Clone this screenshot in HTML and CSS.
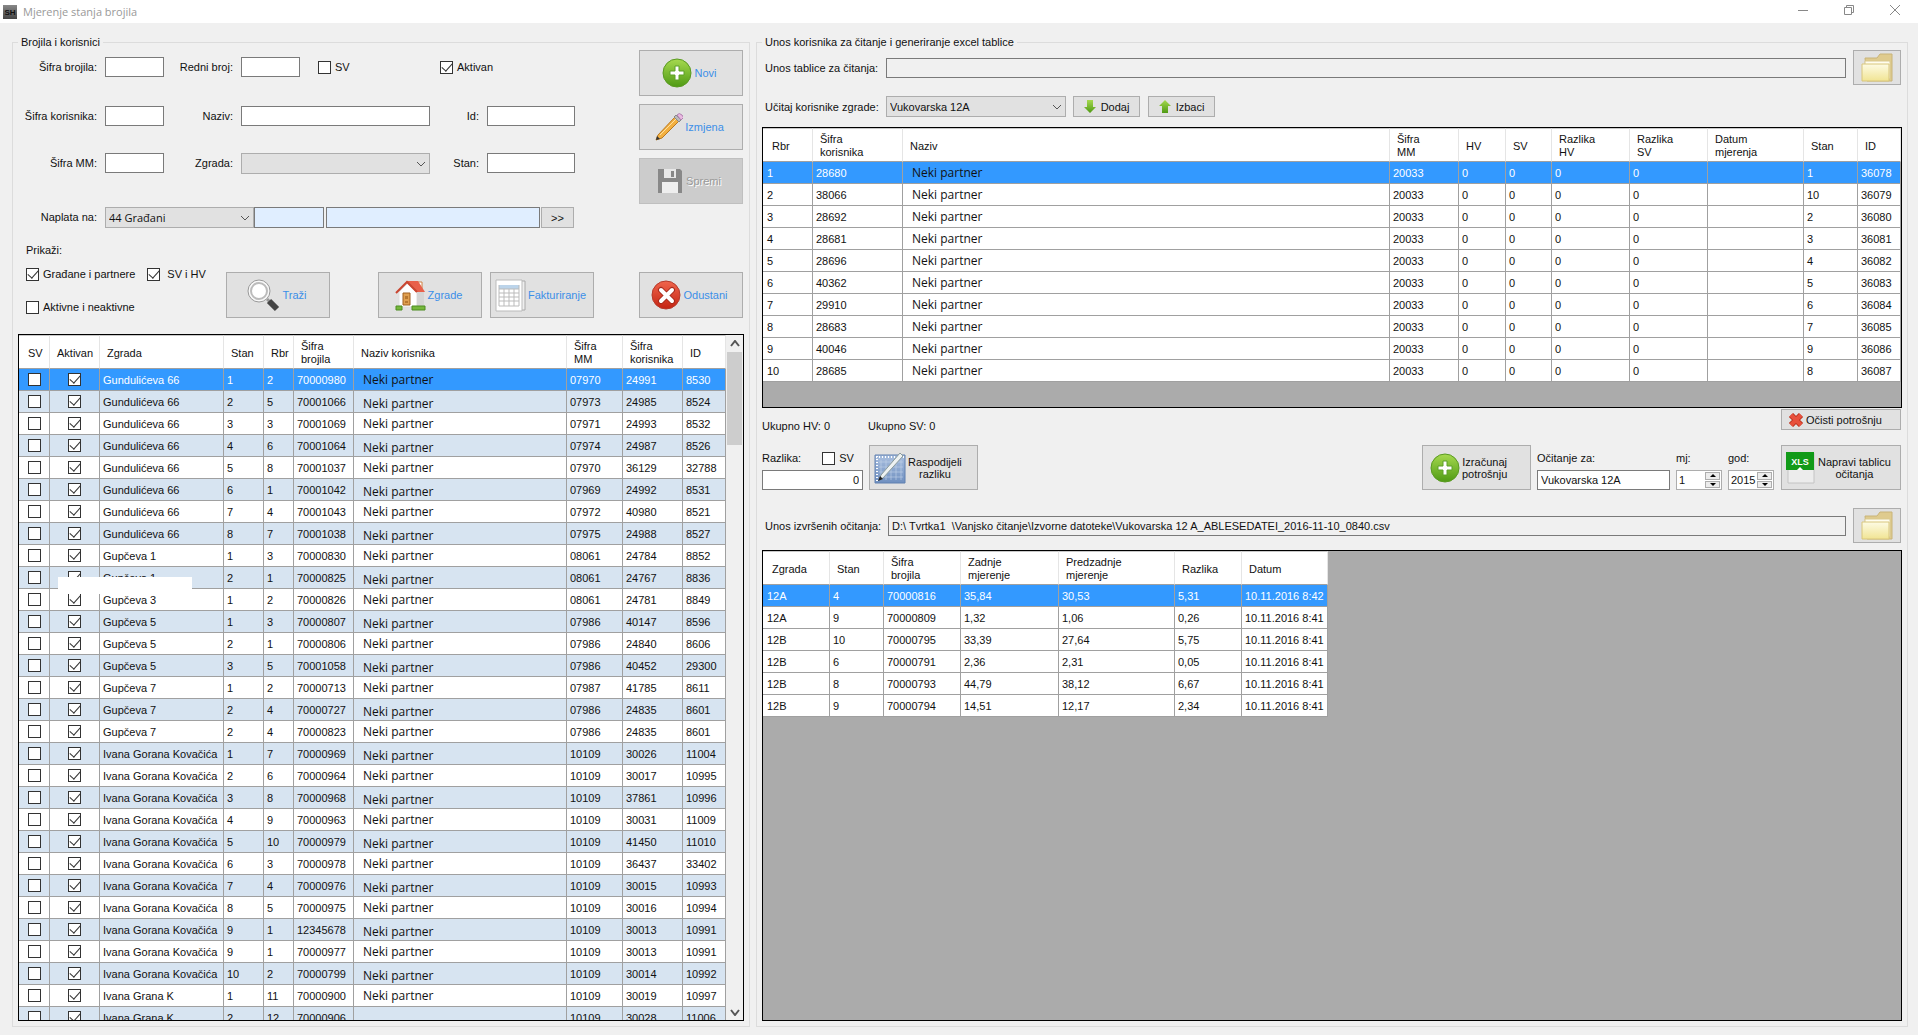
FILE: index.html
```html
<!DOCTYPE html>
<html lang="hr">
<head>
<meta charset="utf-8">
<title>Mjerenje stanja brojila</title>
<link rel="stylesheet" href="styles.css">
</head>
<body>
<svg class="defs" aria-hidden="true">
  <defs>
    <linearGradient id="g-green" x1="0" y1="0" x2="0" y2="1"><stop offset="0" stop-color="#a6d94f"/><stop offset="1" stop-color="#4f9a14"/></linearGradient>
    <linearGradient id="g-red" x1="0" y1="0" x2="0" y2="1"><stop offset="0" stop-color="#f0654c"/><stop offset="1" stop-color="#c42413"/></linearGradient>
    <linearGradient id="g-folder" x1="0" y1="0" x2="0" y2="1"><stop offset="0" stop-color="#fdfbe4"/><stop offset="1" stop-color="#f1e493"/></linearGradient>
    <linearGradient id="g-ruler" x1="0" y1="0" x2="0" y2="1"><stop offset="0" stop-color="#a9bfdf"/><stop offset="1" stop-color="#7090c0"/></linearGradient>
    <linearGradient id="g-logo" x1="0" y1="0" x2="0" y2="1"><stop offset="0" stop-color="#888"/><stop offset="1" stop-color="#444"/></linearGradient>
    <symbol id="i-plus" viewBox="0 0 30 30"><circle cx="15" cy="15" r="14" fill="url(#g-green)" stroke="#5a9a22"/><path d="M13 8h4v5h5v4h-5v5h-4v-5H8v-4h5z" fill="#fff" stroke="#5da028"/></symbol>
    <symbol id="i-cancel" viewBox="0 0 30 30"><circle cx="15" cy="15" r="14" fill="url(#g-red)" stroke="#b53a2c"/><path d="M10 10l11 11M21 10L10 21" stroke="#a52a1c" stroke-width="6" stroke-linecap="round"/><path d="M10 10l11 11M21 10L10 21" stroke="#fff" stroke-width="4" stroke-linecap="round"/></symbol>
    <symbol id="i-folder" viewBox="0 0 34 30"><path d="M5 5h12l3-4h12v27H7z" fill="#dfcb8e" stroke="#c9b478"/><path d="M5 8h25v18H5z" fill="#fffdf0" stroke="#d9c98f"/><path d="M2 11h27v17H2z" fill="url(#g-folder)" stroke="#d8c67c"/></symbol>
    <symbol id="i-chevron" viewBox="0 0 10 6"><path d="M1 1l4 4 4-4" fill="none" stroke="#555"/></symbol>
  </defs>
</svg>

<header class="titlebar">
  <svg class="logo" viewBox="0 0 14 14"><rect width="14" height="14" fill="url(#g-logo)"/><text x="7" y="10" text-anchor="middle" font-size="8" font-weight="700" fill="#111">SH</text></svg>
  <h1>Mjerenje stanja brojila</h1>
  <div class="winbtns">
    <button aria-label="Minimiziraj"><svg viewBox="0 0 10 10"><path d="M0 5.500h10"/></svg></button>
    <button aria-label="Vrati"><svg viewBox="0 0 10 10"><path d="M.5 2.500h7v7h-7zM2.500 2.500v-2h7v7h-2"/></svg></button>
    <button aria-label="Zatvori"><svg viewBox="0 0 10 10"><path d="M0 0l10 10M10 0L0 10"/></svg></button>
  </div>
</header>

<main class="window">
  <fieldset class="group">
    <legend>Brojila i korisnici</legend>
    <div class="top">
      <div class="filters">
        <form class="fields">
          <label for="sifra-brojila">Šifra brojila:</label><input type="text" id="sifra-brojila">
          <label for="redni-broj">Redni broj:</label>
          <div class="rest">
            <input type="text" id="redni-broj" class="short">
            <label class="check wide"><input type="checkbox">SV</label>
            <label class="check"><input type="checkbox" checked>Aktivan</label>
          </div>
          <label for="sifra-korisnika">Šifra korisnika:</label><input type="text" id="sifra-korisnika">
          <label for="naziv">Naziv:</label><input type="text" id="naziv">
          <label for="id">Id:</label><input type="text" id="id">
          <label for="sifra-mm">Šifra MM:</label><input type="text" id="sifra-mm">
          <label for="zgrada">Zgrada:</label>
          <span class="select"><select id="zgrada" disabled><option></option></select><svg><use href="#i-chevron"/></svg></span>
          <label for="stan">Stan:</label><input type="text" id="stan">
          <label for="naplata">Naplata na:</label>
          <div class="billing">
            <span class="select"><select id="naplata" class="ui"><option>44 Građani</option></select><svg><use href="#i-chevron"/></svg></span>
            <input type="text" class="blue code" aria-label="Šifra naplate">
            <input type="text" class="blue" aria-label="Naziv naplate">
            <button type="button" class="btn">&gt;&gt;</button>
          </div>
        </form>
        <div class="lower">
          <div class="show">
            <p>Prikaži:</p>
            <div class="pair">
              <label class="check"><input type="checkbox" checked>Građane i partnere</label>
              <label class="check loose"><input type="checkbox" checked>SV i HV</label>
            </div>
            <label class="check"><input type="checkbox">Aktivne i neaktivne</label>
          </div>
          <button class="btn big"><svg width="34" height="34" viewBox="0 0 34 34"><path d="M21 21l4 4" stroke="#999" stroke-width="3"/><path d="M23 23l8 8" stroke="#444" stroke-width="6"/><circle cx="13" cy="13" r="11" fill="#f8f8f8" stroke="#999"/><circle cx="13" cy="13" r="8" fill="#fff" stroke="#bbb" stroke-width="2"/></svg>Traži</button>
          <div class="spacer"></div>
          <button class="btn big"><svg width="31" height="31" viewBox="0 0 31 31"><path d="M22 2h5v9h-5z" fill="#fff" stroke="#d08040"/><path d="M4 12L13 3l9 9v15H4z" fill="#fff" stroke="#ddd"/><path d="M22 12h7v15h-7z" fill="#d5d5d5"/><path d="M11 1h12l7 11h-9z" fill="#e8604a"/><path d="M1 13L12 2l10 10" fill="none" stroke="#c94530" stroke-width="2"/><path d="M8 13h7v12H8z" fill="#e0a050" stroke="#a06020"/><path d="M10 16h3v3h-3zM10 21h3v2h-3z" fill="#b87830"/><path d="M1 26h6v4H1zM17 26h13v4H17z" fill="#76b83c" stroke="#4c8c20"/></svg>Zgrade</button>
          <button class="btn big"><svg width="31" height="33" viewBox="0 0 31 33"><path d="M4 2h26v29H4z" fill="#eee" stroke="#aaa"/><path d="M1 1h26v31H1z" fill="#fff" stroke="#bbb"/><path d="M4 6h20v4H4z" fill="#bcd4ea"/><path d="M4 10h20M4 14h20M4 18h20M4 22h20M4 27h20M4 6v21M9 10v17M14 10v17M19 10v17M24 6v21" stroke="#bbb"/></svg>Fakturiranje</button>
        </div>
      </div>
      <div class="actions">
        <button class="btn big"><svg width="30" height="30"><use href="#i-plus"/></svg>Novi</button>
        <button class="btn big"><svg width="28" height="28" viewBox="0 0 28 28"><path d="M1 27l2-5L20 4l4 4L7 25z" fill="#f3b040" stroke="#b87820"/><path d="M5 22L21 6" stroke="#fde0a0"/><path d="M1 27l1-4 3 3z" fill="#333"/><path d="M19 4l2-2 5 5-2 2z" fill="#bbb" stroke="#888"/><path d="M22 2q2-3 5 0t0 4l-1 1z" fill="#e8b8e0" stroke="#b080b0"/></svg>Izmjena</button>
        <button class="btn big" disabled><svg width="24" height="24" viewBox="0 0 24 24"><path d="M0 0h22l2 2v22H0z" fill="#888"/><path d="M6 0h12v9H6z" fill="#e8e8e8"/><path d="M13 2h3v6h-3z" fill="#888"/><path d="M4 13h16v11H4z" fill="#eee"/></svg>Spremi</button>
        <button class="btn big last"><svg width="30" height="30"><use href="#i-cancel"/></svg>Odustani</button>
      </div>
    </div>
    <div class="grid fill">
      <table id="brojila">
        <colgroup><col class="w31"><col class="w50"><col class="w124"><col class="w40"><col class="w30"><col class="w60"><col><col class="w56"><col class="w60"><col class="w43"></colgroup>
        <thead><tr><th>SV</th><th>Aktivan</th><th>Zgrada</th><th>Stan</th><th>Rbr</th><th>Šifra<br>brojila</th><th>Naziv korisnika</th><th>Šifra<br>MM</th><th>Šifra<br>korisnika</th><th>ID</th></tr></thead>
        <tbody></tbody>
      </table>
      <div class="scroll"><svg viewBox="0 0 10 7"><path d="M1 6l4-5 4 5"/></svg><div class="thumb"></div><svg class="down" viewBox="0 0 10 7"><path d="M1 1l4 5 4-5"/></svg></div>
      <div class="patch"></div>
    </div>
  </fieldset>

  <fieldset class="group">
    <legend>Unos korisnika za čitanje i generiranje excel tablice</legend>
    <div class="filerow">
      <label for="tablica">Unos tablice za čitanja:</label>
      <input type="text" id="tablica" readonly>
      <button class="btn" aria-label="Otvori tablicu"><svg width="34" height="30"><use href="#i-folder"/></svg></button>
    </div>
    <div class="loadrow">
      <label for="ucitaj">Učitaj korisnike zgrade:</label>
      <span class="select"><select id="ucitaj"><option>Vukovarska 12A</option></select><svg><use href="#i-chevron"/></svg></span>
      <button class="btn small"><svg width="12" height="15" viewBox="0 0 12 15"><path d="M3 1h6v7h3l-6 6-6-6h3z" fill="url(#g-green)"/></svg>Dodaj</button>
      <button class="btn small"><svg width="12" height="15" viewBox="0 0 12 15"><path d="M3 14h6V7h3L6 1 0 7h3z" fill="url(#g-green)"/></svg>Izbaci</button>
    </div>
    <div class="grid users">
      <table id="korisnici">
        <colgroup><col class="w50"><col class="w90"><col><col class="w69"><col class="w47"><col class="w46"><col class="w78"><col class="w78"><col class="w96"><col class="w54"><col class="w43"></colgroup>
        <thead><tr><th>Rbr</th><th>Šifra<br>korisnika</th><th>Naziv</th><th>Šifra<br>MM</th><th>HV</th><th>SV</th><th>Razlika<br>HV</th><th>Razlika<br>SV</th><th>Datum<br>mjerenja</th><th>Stan</th><th>ID</th></tr></thead>
        <tbody></tbody>
      </table>
    </div>
    <div class="totals">
      <p>Ukupno HV: 0</p><p>Ukupno SV: 0</p>
      <button class="btn clear"><svg width="16" height="16" viewBox="0 0 16 16"><path d="M3 3l10 10M13 3L3 13" stroke="#b8301c" stroke-width="6"/><path d="M3 3l10 10M13 3L3 13" stroke="#e8503c" stroke-width="4"/></svg>Očisti potrošnju</button>
    </div>
    <div class="tools">
      <div class="diff">
        <div class="pair"><label for="razlika">Razlika:</label><label class="check"><input type="checkbox">SV</label></div>
        <input type="text" id="razlika" value="0">
      </div>
      <button class="btn tool"><svg width="32" height="32" viewBox="0 0 32 32"><path d="M1 3h30v28H1z" fill="url(#g-ruler)" stroke="#6080b0"/><path d="M7 8v20M12 8v20M17 8v20M22 8v20M27 8v20M5 10h24M5 15h24M5 20h24M5 25h24" stroke="#c5d4ea" stroke-width=".6"/><path d="M2 5h28M3 4v26" stroke="#fff" stroke-width="2" stroke-dasharray="1 2"/><path d="M5 28l2-5L26 1l3 3L9 26z" fill="#eef2f2" stroke="#8a9a9a"/><path d="M4 29l2-5 3 3z" fill="#222"/></svg><span>Raspodijeli<br>razliku</span></button>
      <button class="btn tool calc"><svg width="30" height="30"><use href="#i-plus"/></svg><span>Izračunaj<br>potrošnju</span></button>
      <div class="stack reading"><label for="ocitanje">Očitanje za:</label><input type="text" id="ocitanje" value="Vukovarska 12A"></div>
      <div class="stack"><label for="mj">mj:</label><span class="spin"><input type="text" id="mj" value="1"><span class="arrows"><button aria-label="Više"><svg viewBox="0 0 6 3"><path d="M0 3l3-3 3 3z"/></svg></button><button aria-label="Manje"><svg viewBox="0 0 6 3"><path d="M0 0l3 3 3-3z"/></svg></button></span></span></div>
      <div class="stack"><label for="god">god:</label><span class="spin"><input type="text" id="god" value="2015"><span class="arrows"><button aria-label="Više"><svg viewBox="0 0 6 3"><path d="M0 3l3-3 3 3z"/></svg></button><button aria-label="Manje"><svg viewBox="0 0 6 3"><path d="M0 0l3 3 3-3z"/></svg></button></span></span></div>
      <button class="btn tool make"><svg width="30" height="34" viewBox="0 0 30 34"><path d="M2 2h26v30H2z" fill="#ececec" stroke="#c4c4c4"/><path d="M0 1h28v18H0z" fill="#119a18"/><path d="M11 19l3-3 3 3z" fill="#fff"/><text x="14" y="14" text-anchor="middle" font-size="9" font-weight="700" fill="#fff">XLS</text></svg><span>Napravi tablicu<br>očitanja</span></button>
    </div>
    <div class="filerow second">
      <label for="ocitanja">Unos izvršenih očitanja:</label>
      <input type="text" id="ocitanja" readonly value="D:\ Tvrtka1  \Vanjsko čitanje\Izvorne datoteke\Vukovarska 12 A_ABLESEDATEI_2016-11-10_0840.csv">
      <button class="btn" aria-label="Otvori očitanja"><svg width="34" height="30"><use href="#i-folder"/></svg></button>
    </div>
    <div class="grid fill">
      <table id="mjerenja" class="natural">
        <colgroup><col class="w67"><col class="w54"><col class="w77"><col class="w98"><col class="w116"><col class="w67"><col class="w86"></colgroup>
        <thead><tr><th>Zgrada</th><th>Stan</th><th>Šifra<br>brojila</th><th>Zadnje<br>mjerenje</th><th>Predzadnje<br>mjerenje</th><th>Razlika</th><th>Datum</th></tr></thead>
        <tbody></tbody>
      </table>
    </div>
  </fieldset>
</main>
<script src="app.js"></script>
</body>
</html>
```
FILE: styles.css
```css
* { box-sizing: border-box; }
body {
  margin: 0;
  height: 100vh;
  display: flex;
  flex-direction: column;
  background: #f0f0f0;
  color: #111;
  font: 11px/14px "Liberation Sans", Arial, sans-serif;
}
p, h1 { margin: 0; }
button, input, select { font: inherit; color: inherit; margin: 0; }
.defs { position: absolute; width: 0; height: 0; }

/* Title bar */
.titlebar { flex: none; height: 23px; display: flex; align-items: center; gap: 6px; padding-left: 3px; background: #fff; }
.logo { width: 14px; height: 14px; }
h1 { flex: 1; font: 11px/16px "Open Sans", "Segoe UI", sans-serif; color: #999; }
.winbtns { display: flex; align-self: stretch; }
.winbtns button { width: 46px; padding: 0 0 3px; border: 0; background: none; display: flex; align-items: center; justify-content: center; }
.winbtns svg { width: 10px; height: 10px; fill: none; stroke: #888; }

/* Group boxes */
.window { flex: 1; min-height: 0; display: grid; grid-template-columns: 41fr 64fr; gap: 6px; padding: 12px 10px 8px 12px; }
.group { min-width: 0; min-height: 0; margin: 0; padding: 0 5px 5px; border: 1px solid #dcdcdc; display: flex; flex-direction: column; }
legend { padding: 0 3px; line-height: 14px; }

/* Controls */
input[type="text"] { height: 20px; min-width: 0; width: 100%; padding: 0 3px; border: 1px solid #7a7a7a; background: #fff; border-radius: 0; outline: 0; }
input[type="text"][readonly] { background: #f0f0f0; }
input[type="text"].blue { height: 21px; background: #e0eeff; }
input[type="checkbox"] { appearance: none; flex: none; width: 13px; height: 13px; border: 1px solid #333; background: #fff; display: grid; place-items: center; }
input[type="checkbox"]:checked::after { content: ""; width: 9px; height: 5px; margin-top: -3px; border: solid #333; border-width: 0 0 1px 1px; transform: rotate(-48deg); }
.check { display: flex; align-items: center; gap: 4px; }
.check.loose { gap: 7px; }
.select { position: relative; display: block; }
.select select { appearance: none; display: block; width: 100%; height: 21px; padding: 0 3px; border: 1px solid #adadad; border-radius: 0; background: #e1e1e1; opacity: 1; }
.select .ui { font-family: "Open Sans", "Segoe UI", sans-serif; }
.select svg { position: absolute; right: 4px; top: 8px; width: 10px; height: 6px; pointer-events: none; }
.btn { display: flex; align-items: center; justify-content: center; gap: 2px; padding: 0; border: 1px solid #adadad; background: #e1e1e1; }
.btn svg { flex: none; }
.big { width: 104px; height: 46px; padding-right: 3px; color: #3b8fe8; }
.big:disabled { color: #9a9a9a; background: #ccc; border-color: #bfbfbf; text-shadow: 1px 1px #fff; gap: 4px; }

/* Meter filter form */
.top { display: flex; padding: 1px 1px 16px 0; }
.filters { flex: 1; min-width: 0; }
.fields { display: grid; grid-template-columns: 79px 59px 61px 189px 41px 88px; grid-template-rows: 49px 47px 54px 21px; column-gap: 8px; align-items: start; padding-top: 7px; }
.fields > label { text-align: right; line-height: 20px; }
.rest { grid-column: 4 / -1; display: flex; gap: 18px; height: 20px; }
.rest .short { width: 59px; }
.wide { width: 104px; }
.billing { grid-column: 2 / -1; display: grid; grid-template-columns: 149px 72px 1fr 34px; padding-right: 1px; }
.billing .code { width: 70px; }
.billing .btn { margin-left: 1px; height: 21px; }
.lower { display: flex; align-items: flex-end; padding: 15px 0 0 8px; }
.show { width: 200px; padding-bottom: 4px; }
.show p { margin-bottom: 10px; }
.show .pair { margin-bottom: 19px; gap: 12px; }
.pair { display: flex; justify-content: flex-start; }
.spacer { width: 48px; }
.lower .big + .big { margin-left: 8px; }
.actions { display: flex; flex-direction: column; gap: 8px; }
.actions .last { margin-top: auto; }

/* Data grids */
.grid { position: relative; display: flex; align-items: flex-start; border: 1px solid #000; background: #ababab; overflow: hidden; }
.fill { flex: 1; min-height: 0; }
.users { flex: none; height: 281px; }
table { flex: 1; width: 100%; min-width: 0; table-layout: fixed; border-spacing: 0; }
table.natural { flex: none; width: 565px; }
th, td { overflow: hidden; white-space: nowrap; text-align: left; font-weight: 400; border-bottom: 1px solid #a0a0a0; background: #fff; }
th { height: 34px; padding: 2px 0 0 7px; line-height: 13px; border-right: 1px solid #e5e5e5; border-top: 1px solid #c8c8c8; }
th:first-child { padding-left: 9px; }
td { height: 22px; padding: 0 0 0 3px; line-height: 20px; border-right: 1px solid #a0a0a0; }
td:first-child { padding-left: 4px; }
td.tick { padding: 0; }
td.tick input { margin: 0 auto; }
td.name { padding-left: 9px; font: 12px/16px "Open Sans", "Segoe UI", sans-serif; color: #111; }
#brojila tr:nth-child(even) td { background: #d7e4f1; }
#brojila tr:nth-child(even) td.name { padding-top: 4px; }
tbody tr:first-child td, #brojila tbody tr:first-child td { background: #3399ff; color: #fff; }
tbody tr:first-child td.name, #brojila tbody tr:first-child td.name { color: #111; }
.w30 { width: 30px; } .w31 { width: 31px; } .w40 { width: 40px; } .w43 { width: 43px; }
.w46 { width: 46px; } .w47 { width: 47px; } .w50 { width: 50px; } .w54 { width: 54px; }
.w56 { width: 56px; } .w60 { width: 60px; } .w67 { width: 67px; } .w69 { width: 69px; }
.w77 { width: 77px; } .w78 { width: 78px; } .w86 { width: 86px; } .w90 { width: 90px; }
.w96 { width: 96px; } .w98 { width: 98px; } .w116 { width: 116px; } .w124 { width: 124px; }
.scroll { align-self: stretch; flex: none; width: 17px; display: flex; flex-direction: column; align-items: center; padding: 5px 1px 4px 1px; background: #f0f0f0; }
.scroll svg { width: 10px; height: 7px; fill: none; stroke: #555; stroke-width: 2; }
.thumb { width: 100%; height: 93px; margin-top: 5px; background: #cdcdcd; }
.scroll .down { margin-top: auto; }
.patch { position: absolute; left: 39px; top: 242px; width: 134px; height: 17px; background: #fff; }

/* Reading panel */
.filerow { display: flex; align-items: center; padding: 1px 1px 0 3px; }
.filerow label { flex: none; width: 121px; }
.filerow.second { padding-bottom: 7px; }
.filerow.second label { width: 123px; }
.filerow .btn { flex: none; width: 48px; height: 35px; margin-left: 7px; }
.loadrow { display: flex; align-items: center; padding: 11px 0 10px 3px; }
.loadrow label { width: 121px; }
.loadrow .select { width: 180px; }
.small { width: 67px; height: 21px; margin-left: 7px; gap: 5px; }
.small + .small { margin-left: 8px; }
.totals { display: flex; align-items: flex-end; padding: 1px 1px 0 0; }
.totals p { width: 106px; line-height: 8px; }
.clear { width: 120px; height: 21px; margin-left: auto; justify-content: flex-start; padding-left: 6px; }
.tools { display: flex; gap: 6px; padding: 15px 1px 17px 0; }
.diff { width: 101px; display: flex; flex-direction: column; justify-content: space-between; padding-top: 6px; }
.diff .pair { gap: 21px; }
.diff input[type="text"] { text-align: right; }
.tool { width: 109px; height: 45px; line-height: 12px; justify-content: flex-start; padding-left: 4px; }
.calc { margin-left: auto; padding-left: 7px; }
.make { width: 120px; margin-left: 1px; gap: 2px; }
.stack { width: 46px; display: flex; flex-direction: column; justify-content: space-between; padding-top: 6px; }
.reading { width: 133px; }
.spin { display: flex; height: 20px; border: 1px solid #adadad; background: #fff; padding: 1px; }
.spin input[type="text"] { height: 16px; border: 0; padding: 0 1px; }
.arrows { flex: none; width: 15px; display: grid; grid-template-rows: 1fr 1fr; gap: 1px; }
.arrows button { display: grid; place-items: center; padding: 0; border: 1px solid #adadad; background: #ececec; min-height: 0; }
.arrows svg { width: 6px; height: 3px; display: block; }
```
FILE: app.js
```js
const meters = [
  "Gundulićeva 66|1|2|70000980|07970|24991|8530",
  "Gundulićeva 66|2|5|70001066|07973|24985|8524",
  "Gundulićeva 66|3|3|70001069|07971|24993|8532",
  "Gundulićeva 66|4|6|70001064|07974|24987|8526",
  "Gundulićeva 66|5|8|70001037|07970|36129|32788",
  "Gundulićeva 66|6|1|70001042|07969|24992|8531",
  "Gundulićeva 66|7|4|70001043|07972|40980|8521",
  "Gundulićeva 66|8|7|70001038|07975|24988|8527",
  "Gupčeva 1|1|3|70000830|08061|24784|8852",
  "Gupčeva 1|2|1|70000825|08061|24767|8836",
  "Gupčeva 3|1|2|70000826|08061|24781|8849",
  "Gupčeva 5|1|3|70000807|07986|40147|8596",
  "Gupčeva 5|2|1|70000806|07986|24840|8606",
  "Gupčeva 5|3|5|70001058|07986|40452|29300",
  "Gupčeva 7|1|2|70000713|07987|41785|8611",
  "Gupčeva 7|2|4|70000727|07986|24835|8601",
  "Gupčeva 7|2|4|70000823|07986|24835|8601",
  "Ivana Gorana Kovačića|1|7|70000969|10109|30026|11004",
  "Ivana Gorana Kovačića|2|6|70000964|10109|30017|10995",
  "Ivana Gorana Kovačića|3|8|70000968|10109|37861|10996",
  "Ivana Gorana Kovačića|4|9|70000963|10109|30031|11009",
  "Ivana Gorana Kovačića|5|10|70000979|10109|41450|11010",
  "Ivana Gorana Kovačića|6|3|70000978|10109|36437|33402",
  "Ivana Gorana Kovačića|7|4|70000976|10109|30015|10993",
  "Ivana Gorana Kovačića|8|5|70000975|10109|30016|10994",
  "Ivana Gorana Kovačića|9|1|12345678|10109|30013|10991",
  "Ivana Gorana Kovačića|9|1|70000977|10109|30013|10991",
  "Ivana Gorana Kovačića|10|2|70000799|10109|30014|10992",
  "Ivana Grana K|1|11|70000900|10109|30019|10997",
  "Ivana Grana K|2|12|70000906|10109|30028|11006"
];
const users = [
  "28680|1", "38066|10", "28692|2", "28681|3", "28696|4",
  "40362|5", "29910|6", "28683|7", "40046|9", "28685|8"
];
const readings = [
  "12A|4|70000816|35,84|30,53|5,31|10.11.2016 8:42",
  "12A|9|70000809|1,32|1,06|0,26|10.11.2016 8:41",
  "12B|10|70000795|33,39|27,64|5,75|10.11.2016 8:41",
  "12B|6|70000791|2,36|2,31|0,05|10.11.2016 8:41",
  "12B|8|70000793|44,79|38,12|6,67|10.11.2016 8:41",
  "12B|9|70000794|14,51|12,17|2,34|10.11.2016 8:41"
];

const partner = "Neki partner";
const cells = values => values.map(v => `<td>${v}</td>`).join("");
const name = text => `<td class="name">${text}</td>`;
const tick = (label, on) => `<td class="tick"><input type="checkbox" aria-label="${label}"${on ? " checked" : ""}></td>`;
const fill = (id, rows) => {
  document.querySelector(`#${id} tbody`).innerHTML = rows.map(r => `<tr>${r}</tr>`).join("");
};

fill("brojila", meters.map((row, i) => {
  const v = row.split("|");
  return tick("SV", false) + tick("Aktivan", true) + cells(v.slice(0, 4)) +
    name(i < meters.length - 1 ? partner : "") + cells(v.slice(4));
}));
fill("korisnici", users.map((row, i) => {
  const [code, flat] = row.split("|");
  return cells([i + 1, code]) + name(partner) + cells(["20033", 0, 0, 0, 0, "", flat, 36078 + i]);
}));
fill("mjerenja", readings.map(row => cells(row.split("|"))));
```
